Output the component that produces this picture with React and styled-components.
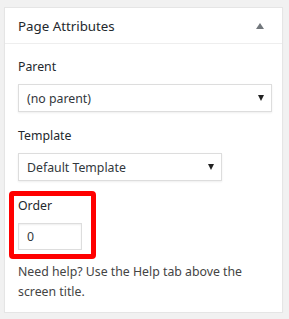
import React from 'react';
import styled, { createGlobalStyle } from 'styled-components';

const GlobalStyle = createGlobalStyle`
  body {
    margin: 0;
    background: #f1f1f1;
    font-family: "Noto Sans", "Open Sans", sans-serif;
    color: #23282d;
  }
`;

const Panel = styled.div`
  margin: 7px 0 0 4px;
  width: 279px;
  height: 306px;
  box-sizing: border-box;
  background: #fff;
  border: 1px solid #e5e5e5;
  box-shadow: 0 1px 1px rgba(0, 0, 0, 0.04);
`;

const Header = styled.div`
  display: flex;
  align-items: center;
  justify-content: space-between;
  height: 35px;
  padding: 0 13px;
  border-bottom: 1px solid #eee;
`;

const Title = styled.h2`
  margin: 0;
  font-size: 13.3px;
  font-weight: 400;
  color: #23282d;
`;

const Toggle = styled.span`
  width: 0;
  height: 0;
  margin-right: 5px;
  border-left: 4px solid transparent;
  border-right: 4px solid transparent;
  border-bottom: 6px solid #72777c;
`;

const Body = styled.div`
  display: flex;
  flex-direction: column;
  padding: 14px 10px 0 13px;
`;

const Label = styled.div`
  font-size: 12.3px;
  line-height: 18px;
  margin-bottom: 8px;
`;

const Select = styled.div`
  display: flex;
  align-items: center;
  justify-content: space-between;
  box-sizing: border-box;
  width: ${p => p.width}px;
  height: 28px;
  padding: 0 7px 0 8px;
  margin-bottom: 15px;
  border: 1px solid #ddd;
  box-shadow: 0 1px 2px rgba(0, 0, 0, 0.07);
  font-size: 12.3px;
  color: #32373c;
`;

const Arrow = styled.span`
  width: 0;
  height: 0;
  border-left: 3.5px solid transparent;
  border-right: 3.5px solid transparent;
  border-top: 6px solid #222;
`;

const Highlight = styled.div`
  position: relative;
  align-self: flex-start;
  margin-top: 1px;
`;

const RedBox = styled.span`
  position: absolute;
  left: -9px;
  top: -6px;
  width: 87px;
  height: 68px;
  box-sizing: border-box;
  border: 5px solid #ff0000;
  border-radius: 4px;
  pointer-events: none;
`;

const Input = styled.div`
  box-sizing: border-box;
  width: 64px;
  height: 27px;
  padding: 0 8px;
  display: flex;
  align-items: center;
  border: 1px solid #ddd;
  box-shadow: inset 0 1px 2px rgba(0, 0, 0, 0.07);
  font-size: 12.3px;
  color: #32373c;
`;

const Help = styled.p`
  margin: 12px 0 0;
  font-size: 12.3px;
  line-height: 20px;
  color: #444;
`;

export default function App() {
  return (
    <>
      <GlobalStyle />
      <Panel>
        <Header>
          <Title>Page Attributes</Title>
          <Toggle />
        </Header>
        <Body>
          <Label>Parent</Label>
          <Select width={254}>
            (no parent)
            <Arrow />
          </Select>
          <Label>Template</Label>
          <Select width={204}>
            Default Template
            <Arrow />
          </Select>
          <Highlight>
            <Label>Order</Label>
            <Input>0</Input>
            <RedBox />
          </Highlight>
          <Help>Need help? Use the Help tab above the screen title.</Help>
        </Body>
      </Panel>
    </>
  );
}
